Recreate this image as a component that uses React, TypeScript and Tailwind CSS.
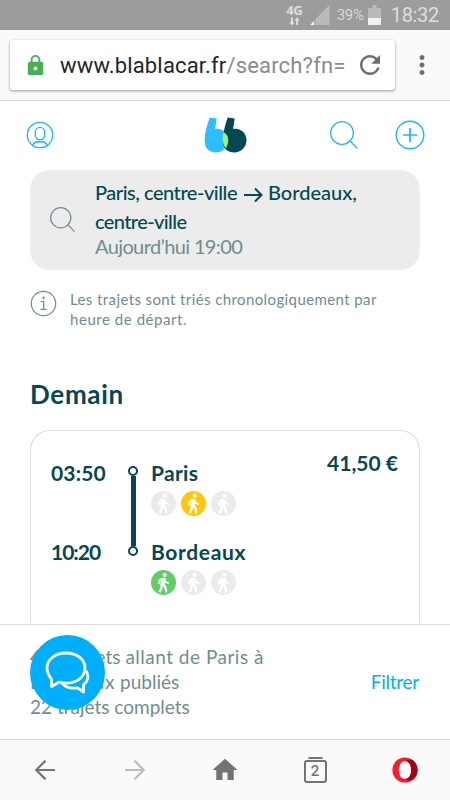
import { MdHome, MdLock, MdMoreVert, MdRefresh } from 'react-icons/md';

interface Stop {
  time: string;
  timeClass: string;
  city: string;
  cityClass: string;
  // index of the highlighted walker, 0 is the closest
  level: number;
}

const stops: Stop[] = [
  { time: '03:50', timeClass: 'tracking-[0.15px]', city: 'Paris', cityClass: 'tracking-[0.3px]', level: 1 },
  { time: '10:20', timeClass: 'tracking-[-1px]', city: 'Bordeaux', cityClass: 'tracking-[0.65px]', level: 0 },
];

const levelColors = ['bg-[#5fcf65]', 'bg-[#ffc60a]', 'bg-[#ff8a00]'];

function StatusBar() {
  return (
    <div className="flex h-[30px] items-center justify-end bg-[#9c9c9c] pr-[11px] font-['Roboto',sans-serif] text-[#dedede]">
      <div className="mr-[6px] flex w-[19px] flex-col items-center">
        <span className="h-[13px] font-['Open_Sans',sans-serif] text-[13px] font-bold leading-[13px] tracking-[-0.5px]">4G</span>
        <svg className="h-[9px] w-[11px]" viewBox="0 0 11 9" fill="currentColor">
          <path d="M2 .5h2v4.8h1.5L3 8.600.3 5.300H2zM7 8V3.700H5.500L8 .3l2.700 3.400H9V8z" />
        </svg>
      </div>
      <svg className="mr-[7px] h-5 w-5" viewBox="0 0 20 20">
        <path d="M19.500 0v20H5.500V14z" fill="#bababa" />
        <path d="M4.200 15.800V20H0z" fill="#f1f1f1" />
      </svg>
      <span className="mr-[4px] text-[15px] tracking-[-0.3px] text-[#d7d7d7]">39%</span>
      <svg className="mr-[10px] h-5 w-[13px]" viewBox="0 0 13 20">
        <path d="M4.500 0h4v3H13v17H0V3h4.500z" fill="#bababa" />
        <path d="M0 13h13v7H0z" fill="#f1f1f1" />
      </svg>
      <span className="text-[20px] tracking-[-0.3px]">18:32</span>
    </div>
  );
}

function AddressBar() {
  return (
    <div className="flex h-[71px] items-center border-b border-[#d8d8d8] bg-[#fafafa] pl-[10px] font-['Roboto',sans-serif]">
      <div className="flex h-[50px] w-[385px] items-center rounded-[3px] bg-white pl-[14px] shadow-[0_1px_3px_rgba(0,0,0,0.4)]">
        <MdLock className="mr-[13px] size-[23px] shrink-0 text-[#48af50]" />
        <div className="w-[287px] overflow-hidden whitespace-nowrap text-[22px] tracking-[0.16px] text-[#8b8b8b]">
          <span className="text-[#242424]">www.blablacar.fr</span>/search?fn=
        </div>
        <MdRefresh className="ml-[8px] size-[30px] shrink-0 text-[#6e6e6e]" />
      </div>
      <MdMoreVert className="ml-[12px] size-[30px] text-[#6e6e6e]" />
    </div>
  );
}

function SearchIcon({ className }: { className: string }) {
  return (
    <svg className={className} viewBox="0 0 28 28" fill="none" stroke="currentColor">
      <circle cx="12" cy="12" r="11.300" />
      <path d="m20 20 7.500 7.500" />
    </svg>
  );
}

function Header() {
  return (
    <header className="grid h-[69px] grid-cols-3 items-center pb-[2px] pl-[26px] pr-[25px] text-[#1bb7f5]">
      <svg className="size-7" viewBox="0 0 28 28" fill="none" stroke="currentColor" strokeWidth="1.3">
        <circle cx="14" cy="14" r="12.700" />
        <rect x="9.300" y="6.300" width="9.400" height="12.500" rx="4.700" />
        <path d="M7 24.500c0-5 14-5 14 0" />
      </svg>
      <svg className="h-9 w-[43px] justify-self-center" viewBox="0 0 43 36">
        <path d="M5.700.4 12.700 1.400 11.100 11.900C18.500 10.700 23.700 16 23.700 23.300 23.700 30.500 18.500 35.500 12 35.500 4.300 35.500.4 30.500.7 22.500.9 14.500 3.200 8 5.700.4Z" fill="#2dbeff" />
        <path d="M23.700.4 30.700 1.400 29.100 11.900C36.700 10.700 42.500 16 42.500 23.300 42.500 30.500 36.700 35.500 30.500 35.500 22.300 35.500 18.600 30.500 18.900 22.500 19.100 14.500 21.200 8 23.700.4Z" fill="#054752" />
        <path d="M19.400 15C25.800 18.400 25.100 26.300 21.800 31.300 18.100 27.100 18.300 20.500 19.400 15Z" fill="#97f86b" />
      </svg>
      <div className="flex items-center justify-end gap-[37px]">
        <SearchIcon className="size-[28px] stroke-[1.3]" />
        <svg className="size-[30px]" viewBox="0 0 30 30" fill="none" stroke="currentColor" strokeWidth="1.4">
          <circle cx="15" cy="15" r="13.800" />
          <path d="M8 15h14M15 8v14" strokeWidth="1.700" />
        </svg>
      </div>
    </header>
  );
}

function Walker({ color }: { color: string }) {
  return (
    <span className={`size-[25px] rounded-full ${color}`}>
      <svg viewBox="0 0 25 25" fill="none" stroke="#fff" strokeLinejoin="round">
        <circle cx="13.700" cy="4.800" r="2.100" fill="#fff" stroke="none" />
        <path d="m12.500 8-1 7.500" strokeWidth="4.400" />
        <path d="M11.600 8.500 8.600 10.200 7.900 14M13.500 9l1.300 3 3 1.500" strokeWidth="1.900" />
        <path d="M10.800 14.500 10.500 18l-2 4.300M12.500 14.500l2 3.200.8 4.600" strokeWidth="2.300" />
      </svg>
    </span>
  );
}

function TripCard() {
  return (
    <article className="flex h-[193px] rounded-t-[20px] border border-b-0 border-[#dcdcdc] pl-[20px] pr-[21px] text-[21px] font-bold leading-[24px] text-[#054752]">
      <div className="w-[76px] pt-[30px]">
        {stops.map((stop) => (
          <div key={stop.time} className={`h-[79px] ${stop.timeClass}`}>{stop.time}</div>
        ))}
      </div>
      <div className="flex w-[12px] flex-col items-center pt-[35px]">
        <span className="size-[10px] rounded-full border-2 border-[#054752]" />
        <span className="h-[70px] w-[5px] bg-[#054752]" />
        <span className="size-[10px] rounded-full border-2 border-[#054752]" />
      </div>
      <div className="ml-[12px] flex-1 pt-[30px]">
        {stops.map((stop) => (
          <div key={stop.city} className={`h-[79px] ${stop.cityClass}`}>
            {stop.city}
            <div className="mt-[6px] flex gap-[5px]">
              {levelColors.map((color, i) => (
                <Walker key={color} color={i === stop.level ? color : 'bg-[#ebebeb]'} />
              ))}
            </div>
          </div>
        ))}
      </div>
      <div className="pt-[20px]">41,50 €</div>
    </article>
  );
}

function ResultsBar() {
  return (
    <div className="relative flex h-[115px] items-center justify-between border-t border-[#dcdcdc] bg-white pl-[30px] pr-[31px] text-[19px] leading-[25px] text-[#708c91]">
      <p className="pb-[1px]">
        442 trajets <span className="tracking-[0.5px]">allant de Paris à</span>
        <br />
        <span className="tracking-[0.7px]">Bordeaux</span> publiés
        <br />
        22 trajets complets
      </p>
      <button className="pb-[2px] tracking-[-0.25px] text-[#00aff5]">Filtrer</button>
      <button className="absolute left-[30px] top-[10px] flex size-[75px] items-center justify-center rounded-full bg-[#00aff9]">
        <svg className="h-[43px] w-[45px]" viewBox="0 0 45 43" fill="none" stroke="#fff" strokeWidth="2.800" strokeLinejoin="round">
          <path d="M21 2C9.500 2 2 9 2 17c0 5.300 2.800 8.800 4.500 11.300v7.200l7.400-4.300c2 .6 4.800.9 7.300.9 11.500 0 18.800-6.600 18.800-15S32.500 2 21 2Z" />
          <path d="M40.700 19.500c4.200 5.500 2 11-2.200 14.200v7.300l-6-4.200c-6.500 1-12-.5-15-4.200" />
        </svg>
      </button>
    </div>
  );
}

function BrowserNav() {
  return (
    <nav className="grid h-[61px] grid-cols-5 place-items-center border-t border-[#d8d8d8] bg-[#fafafa] text-[#737373]">
      <svg className="size-5" viewBox="0 0 20 20" fill="none" stroke="currentColor" strokeWidth="2.2">
        <path d="M20 10H1.500M10.500.7 1.200 10l9.300 9.300" />
      </svg>
      <svg className="size-5 text-[#bdbdbd]" viewBox="0 0 20 20" fill="none" stroke="currentColor" strokeWidth="2.2">
        <path d="M0 10h18.500M9.500.7l9.300 9.300-9.300 9.300" />
      </svg>
      <MdHome className="size-[30px]" />
      <div className="flex flex-col items-center gap-[1px]">
        <span className="h-[2px] w-[15px] rounded-t bg-current" />
        <span className="flex h-[23px] w-[23px] items-center justify-center rounded-[3px] border-2 border-current font-['Roboto',sans-serif] text-[15px] font-medium leading-none">2</span>
      </div>
      <svg className="size-[26px]" viewBox="0 0 26 26">
        <path fillRule="evenodd" d="M13 .4a12.600 12.600 0 1 0 0 25.200 12.600 12.600 0 0 0 0-25.200Zm0 3.600c3.700 0 6.200 4 6.200 9s-2.500 9-6.200 9-6.200-4-6.200-9 2.500-9 6.200-9Z" fill="#ff1b2d" />
        <path d="M13 4c2.200-1.500 4.600-1.500 7.500-1.100a12.600 12.600 0 0 1 0 20.200C17.600 23.500 15.200 23.500 13 22c3.700 0 6.200-4 6.200-9S16.700 4 13 4Z" fill="#a70014" />
      </svg>
    </nav>
  );
}

export default function App() {
  return (
    <div className="flex h-[800px] w-[450px] flex-col overflow-hidden bg-white font-['Lato',sans-serif]">
      <StatusBar />
      <AddressBar />
      <Header />
      <main className="h-[454px] px-[30px]">
        <section className="flex h-[100px] rounded-[20px] bg-[#ececec] pl-[20px] text-[20px] text-[#708c91]">
          <SearchIcon className="mt-[37px] size-[25px] shrink-0 stroke-[1.3]" />
          <div className="ml-[20px] pt-[8px] leading-[29px]">
            <div className="font-medium text-[#054752]">
              <span className="tracking-[-0.47px]">Paris, centre-ville</span>
              <svg className="ml-[7px] mr-[5px] inline h-[16px] w-[19px]" viewBox="0 0 19 16" fill="none" stroke="currentColor" strokeWidth="2">
                <path d="M0 8h17M11 1.500 17.500 8 11 14.500" />
              </svg>
              Bordeaux,
              <br />
              <span className="tracking-[-0.6px]">centre-ville</span>
            </div>
            <div className="leading-[21px] tracking-[-0.62px]">Aujourd’hui 19:00</div>
          </div>
        </section>
        <section className="mt-[19px] flex h-[40px] text-[15px] leading-[20px] text-[#708c91]">
          <svg className="mr-[13px] mt-[1px] size-[27px] shrink-0" viewBox="0 0 27 27" fill="none" stroke="currentColor" strokeWidth="1.2">
            <circle cx="13.500" cy="13.500" r="12.200" />
            <path d="M10.800 11.500h2.900V19M10.500 19.300h6" />
            <circle cx="13.500" cy="7.700" r=".6" fill="currentColor" />
          </svg>
          <p>
            <span className="tracking-[0.4px]">Les trajets sont triés chronologiquement par</span>
            <br />
            <span className="tracking-[0.55px]">heure de départ.</span>
          </p>
        </section>
        <h2 className="mb-[20px] mt-[49px] text-[26px] font-bold leading-[32px] tracking-[0.7px] text-[#054752]">Demain</h2>
        <TripCard />
      </main>
      <ResultsBar />
      <BrowserNav />
    </div>
  );
}
